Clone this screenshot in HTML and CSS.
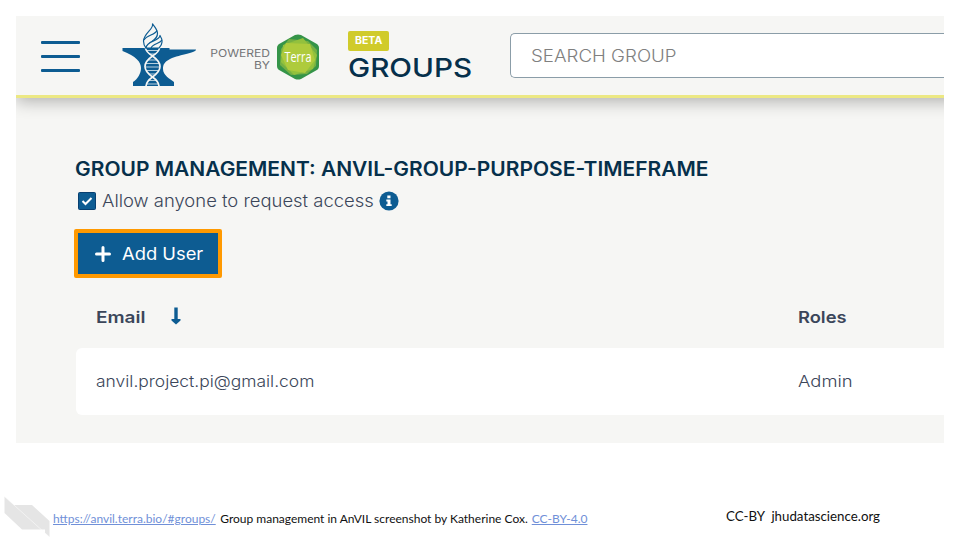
FILE: index.html
```html
<!DOCTYPE html>
<html lang="en">
<head>
<meta charset="utf-8">
<title>Group management</title>
<link rel="stylesheet" href="styles.css">
</head>
<body>
<main class="app">
  <header class="topbar">
    <div class="menu"><i></i><i></i><i></i></div>
    <svg class="anvil" viewBox="0 0 76 64" width="76" height="64">
      <path fill="#0d5c92" d="M1.500 25H48.500V26.500H75C75 30 60 31 49 36C43 39 42 42 42 46C42 52 49 56 53 59V63H12V59C17 56 20 50 20 45C20 39 15 33 1.500 28Z"/>
      <g fill="none" stroke="#b5cedd" stroke-width="1.200">
        <path d="M25 27.500H38M28 31H35M28 37H35M25 40.500H38M24 44H39M25 47.500H38M28 51H35M28 57.500H35M26 61H37"/>
      </g>
      <path fill="none" stroke="#f6f6f4" stroke-width="1.700" d="M24.500 25C25 29 28.500 31 31.500 33C35 35.500 39 38.500 39 43.500S35 51.500 31.500 54S25.500 59 25 63M38.500 25C38 29 34.500 31 31.500 33C28 35.500 24 38.500 24 43.500S28 51.500 31.500 54S37.500 59 38 63"/>
      <g fill="#f6f6f4" stroke="#0d5c92" stroke-width="1.200" stroke-linejoin="round">
        <path d="M31.500 1C33 6 23 10 22.500 18Q22.500 22 25 25C27 18 37 18 36.500 10C36 6 34 4 31.500 1Z"/>
        <path d="M39 12.500C39 18 25 18 25 25H38C42 21 42 17 39 12.500Z"/>
        <path fill="none" d="M23 17C26 12 34 12 36 7.500M30 25C32 20 39 21 41 17"/>
      </g>
    </svg>
    <div class="powered"><span>POWERED</span><span>BY</span></div>
    <svg class="terra" viewBox="0 0 42 46" width="42" height="46">
      <path fill="#359448" d="M18 1Q21 0 24 1L39 9.500Q42 11 42 14V32Q42 35 39 36.500L24 45Q21 46 18 45L3 36.500Q0 35 0 32V14Q0 11 3 9.500Z"/>
      <path fill="#75b043" d="M12 5L31 7L40 16L39 32L30 40L14 41L3 31L4 15Z"/>
      <path fill="#93c13d" d="M6 11L26 4L40 21L36 35L17 41L4 28Z"/>
      <path fill="#aecb3c" d="M9 9L33 10L38 26L28 39L11 36L4 21Z"/>
      <text x="7.500" y="28" textLength="27" lengthAdjust="spacingAndGlyphs">Terra</text>
    </svg>
    <div class="brand"><b class="beta"><span>BETA</span></b><span class="name">GROUPS</span></div>
    <div class="search"><span>SEARCH GROUP</span></div>
  </header>
  <section class="content">
    <h1><span>GROUP MANAGEMENT: ANVIL-GROUP-PURPOSE-TIMEFRAME</span></h1>
    <div class="allow">
      <svg class="check" viewBox="0 0 18 18" width="18" height="18"><rect x=".5" y=".5" width="17" height="17" rx="1" fill="#0d5c92" stroke="#073f70"/><path d="M4.500 9L7.500 12L13.500 6" fill="none" stroke="#fff" stroke-width="2"/></svg>
      <span class="allow-text">Allow anyone to request access</span>
      <svg class="info" viewBox="0 0 20 20" width="20" height="20"><circle cx="10" cy="10" r="9.600" fill="#0d5c92"/><path fill="#fff" d="M8.300 4.500h3.200v2.800H8.300zM7.300 8.500h4.200v4.700h1.200v1.900H7.300v-1.900h1.200v-2.800H7.300z"/></svg>
    </div>
    <button class="add"><svg viewBox="0 0 16 16" width="16" height="16"><path d="M8 1.500V14.500M1.500 8H14.500" stroke="#fff" stroke-width="3" stroke-linecap="round"/></svg><span>Add User</span></button>
    <div class="row head"><div class="cell"><span class="h-email">Email</span><svg class="sort" viewBox="0 0 10 18" width="10" height="18"><path fill="#0d5c92" d="M3.300 .5H6.700V12H9.500V13.500L5 17.500L.5 13.500V12H3.300Z"/></svg></div><div><span class="h-roles">Roles</span></div></div>
    <div class="row card"><div class="cell"><span class="email">anvil.project.pi@gmail.com</span></div><div><span class="admin">Admin</span></div></div>
  </section>
</main>
<footer class="foot">
  <svg class="mark" viewBox="0 0 46 42" width="46" height="42"><path fill="#e5e5e5" d="M.5 .5L41 37V33.500H18L.5 17ZM10 9H28L45.500 25V41Z"/><path d="M.5 .5L45.500 41" stroke="#fff" stroke-width=".5"/></svg>
  <p class="credit"><a>https://anvil.terra.bio/#groups/</a><span class="desc">Group management in AnVIL screenshot by Katherine Cox.</span><a>CC-BY-4.0</a></p>
  <p class="license">CC-BY&nbsp; jhudatascience.org</p>
</footer>
</body>
</html>
```
FILE: styles.css
```css
* { box-sizing: border-box; }
body { margin: 0; width: 960px; height: 540px; overflow: hidden; background: #fff; font-family: Inter, "Liberation Sans", sans-serif; }
span { display: inline-block; white-space: nowrap; transform-origin: 0 50%; }
.app { margin: 16px 16px 0; width: 928px; height: 427px; background: #f6f6f4; overflow: hidden; }
.topbar { height: 82px; display: flex; align-items: flex-start; border-bottom: 3px solid #ece883; box-shadow: 0 3px 16px rgba(0,0,0,.3); margin-right: -16px; padding-left: 25px; }
.menu { width: 39px; margin-top: 25px; display: grid; gap: 11px; }
.menu i { height: 3px; background: #0d5c92; border-radius: 1px; }
.anvil { margin: 7px 0 0 41px; }
.powered { width: 60px; margin: 32px 0 0 13px; font-size: 10.5px; line-height: 12px; color: #737477; display: flex; flex-direction: column; align-items: flex-end; }
.powered span { height: 12px; transform-origin: 100% 50%; transform: scaleX(1.15); }
.terra { margin: 18px 0 0 7px; overflow: visible; }
.terra text { fill: #fff; font: 500 14.5px "Open Sans", sans-serif; }
.brand { width: 162px; margin: 15px 0 0 29px; display: flex; flex-direction: column; align-items: flex-start; color: #06304b; }
.beta { width: 41px; height: 20px; border-radius: 2px; background: #d0cb2b; color: #fff; font-size: 10.5px; line-height: 20px; padding-left: 7px; }
.name { font-size: 26px; font-weight: 450; line-height: 34px; transform: scaleX(1.14); }
.search { flex: 1; height: 45px; margin-top: 17px; border: 1.500px solid #8b9da8; border-right: 0; border-radius: 5px 0 0 5px; background: #fff; padding: 1px 0 0 20px; color: #808080; font-size: 17px; font-weight: 350; line-height: 43px; }
.search span { transform: scaleX(1.1); }
.content { padding: 56px 0 0 60px; color: #3b465a; }
h1 { margin: 0 0 0 -1px; font-size: 19.500px; line-height: 30px; font-weight: 600; color: #06304b; }
h1 span { transform: scaleX(1.075); }
.allow { display: flex; align-items: center; height: 34px; padding-left: 2px; font-size: 17px; font-weight: 350; }
.allow-text { width: 271px; margin: 0 6px 0 6px; transform: scaleX(1.084); }
.add { display: flex; align-items: center; gap: 11px; margin: 11px 0 0 -2px; width: 148px; height: 49px; padding: 0 0 0 17px; border: 4px solid #ff9900; border-radius: 2px; background: #0d5c92; color: #fff; font: 400 17px Inter, sans-serif; }
.add span { transform: scaleX(1.08); }
.row { display: grid; grid-template-columns: 702px 1fr; align-items: center; padding-left: 20px; font-size: 16.500px; }
.head { height: 70px; padding-top: 7px; font-weight: 600; }
.cell { display: flex; align-items: center; }
.h-email { width: 75px; transform: scaleX(1.15); }
.sort { margin-top: -2px; }
.h-roles { transform: scaleX(1.11); }
.card { height: 67px; padding-bottom: 2px; background: #fff; border-radius: 6px 0 0 6px; font-size: 16px; font-weight: 350; }
.email { transform: scaleX(1.09); }
.admin { transform: scaleX(1.15); }
.foot { margin: 53px 0 0 4px; display: flex; align-items: flex-start; font-family: Lato, sans-serif; color: #111; }
.foot p { margin: 0; white-space: nowrap; }
.credit { width: 676px; padding: 15px 0 0 3px; font-size: 12px; line-height: 16px; }
.desc { margin: 0 4px 0 4.500px; }
.credit a { color: #7090d8; text-decoration: underline; }
.license { padding-top: 12px; font-size: 13.300px; line-height: 16px; }
```
